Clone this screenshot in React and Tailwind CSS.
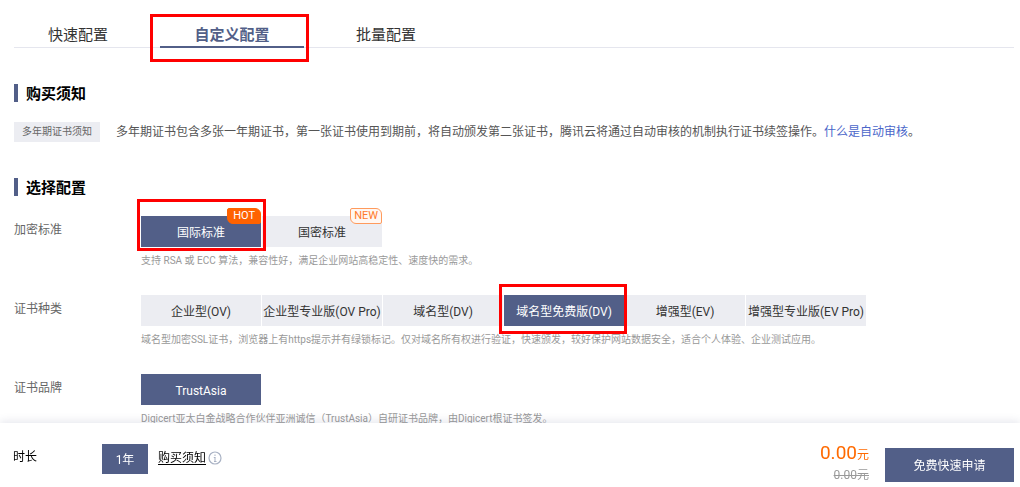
import { useState } from "react"

const TABS = ["快速配置", "自定义配置", "批量配置"]

const STANDARDS = [
  { name: "国际标准", badge: "HOT" },
  { name: "国密标准", badge: "NEW" },
]

const TYPES = [
  { name: "企业型(OV)" },
  { name: "企业型专业版(OV Pro)" },
  { name: "域名型(DV)" },
  { name: "域名型免费版(DV)" },
  { name: "增强型(EV)" },
  { name: "增强型专业版(EV Pro)" },
]

const BRANDS = [{ name: "TrustAsia" }]

// Red frame around a highlighted control
function Mark({ className }) {
  return <span className={`absolute border-3 border-[#ff0000] pointer-events-none z-10 ${className}`} />
}

function Title({ children }) {
  return (
    <h2 className="flex items-center gap-2 h-[18px] text-[15px] font-bold text-black">
      <span className="w-1 h-[18px] bg-[#525f88]" />
      <span className="pt-0.5">{children}</span>
    </h2>
  )
}

function Badge({ type }) {
  return (
    <span
      className={`absolute right-0 -top-2 h-4 border rounded-tl-xs rounded-tr-md rounded-bl-md rounded-br-xs text-[11px] leading-[14px] ${
        type === "HOT"
          ? "bg-[#ff6200] border-[#ff6200] text-white px-[5px]"
          : "bg-[#fff7f2] border-[#ff9a5c] text-[#ff7a2b] px-[3px]"
      }`}
    >
      {type}
    </span>
  )
}

function OptionRow({ label, options, value, onChange, desc, markClass }) {
  return (
    <div className="flex">
      <div className="w-[127px] shrink-0 text-xs leading-7 text-[#666]">{label}</div>
      <div className="flex-1">
        <div role="group" aria-label={label} className="flex gap-px">
          {options.map((o) => (
            <div key={o.name} className="relative w-[120px]">
              <button
                type="button"
                aria-pressed={value === o.name}
                onClick={() => onChange(o.name)}
                className={`w-full h-[31px] pt-[3px] text-xs whitespace-nowrap ${
                  value === o.name ? "bg-[#525f88] text-white" : "bg-[#ecedf2] text-[#333]"
                }`}
              >
                {o.name}
              </button>
              {o.badge && <Badge type={o.badge} />}
              {markClass && value === o.name && <Mark className={markClass} />}
            </div>
          ))}
        </div>
        <p className="mt-1 text-[10px] leading-5 text-[#999]">{desc}</p>
      </div>
    </div>
  )
}

function App() {
  const [tab, setTab] = useState("自定义配置")
  const [standard, setStandard] = useState("国际标准")
  const [type, setType] = useState("域名型免费版(DV)")
  const [brand, setBrand] = useState("TrustAsia")

  return (
    <div className="bg-white font-['Roboto','Noto_Sans_CJK_SC',sans-serif]">
      <main className="pl-3.5 pr-1.5 pt-[23px]">
        {/* Tabs */}
        <nav className="border-b border-[#e5e6ee]">
          <div className="flex gap-2.5 -ml-2">
            {TABS.map((t) => (
              <div key={t} className="relative w-36">
                <button
                  type="button"
                  onClick={() => setTab(t)}
                  className={`w-full h-6 -mb-px text-[15px] leading-[22px] border-b-2 ${
                    tab === t ? "border-[#525f88] text-[#525f88] font-bold" : "border-transparent text-[#333]"
                  }`}
                >
                  {t}
                </button>
                {tab === t && <Mark className="-left-2.5 -right-[5px] -top-[9px] -bottom-[15px]" />}
              </div>
            ))}
          </div>
        </nav>

        {/* Notice */}
        <section className="mt-9">
          <Title>购买须知</Title>
          <div className="flex items-center gap-4 mt-5">
            <span className="h-5 px-2 bg-[#ecedf2] text-[10px] leading-5 text-[#666] whitespace-nowrap">
              多年期证书须知
            </span>
            <p className="text-xs leading-5 text-[#555]">
              多年期证书包含多张一年期证书，第一张证书使用到期前，将自动颁发第二张证书，腾讯云将通过自动审核的机制执行证书续签操作。
              <a href="#auto-review" className="text-[#4a66c9]">什么是自动审核</a>。
            </p>
          </div>
        </section>

        {/* Configuration */}
        <section className="mt-9">
          <Title>选择配置</Title>
          <div className="flex flex-col gap-6 mt-5">
            <OptionRow
              label="加密标准"
              options={STANDARDS}
              value={standard}
              onChange={setStandard}
              desc="支持 RSA 或 ECC 算法，兼容性好，满足企业网站高稳定性、速度快的需求。"
              markClass="-left-1 -right-[5px] -top-[17px] -bottom-1"
            />
            <OptionRow
              label="证书种类"
              options={TYPES}
              value={type}
              onChange={setType}
              desc="域名型加密SSL证书，浏览器上有https提示并有绿锁标记。仅对域名所有权进行验证，快速颁发，较好保护网站数据安全，适合个人体验、企业测试应用。"
              markClass="-left-[5px] -right-[3px] -top-[11px] -bottom-2"
            />
            <OptionRow
              label="证书品牌"
              options={BRANDS}
              value={brand}
              onChange={setBrand}
              desc="Digicert亚太白金战略合作伙伴亚洲诚信（TrustAsia）自研证书品牌，由Digicert根证书签发。"
            />
          </div>
        </section>
      </main>

      {/* Order bar */}
      <footer className="fixed bottom-0 inset-x-0 z-20 flex items-center justify-between h-16 pl-[13px] pr-1.5 bg-white shadow-[0_-2px_8px_rgba(82,95,136,0.14)]">
        <div className="flex items-center pt-1 text-xs text-black">
          <span className="w-[89px]">时长</span>
          <button type="button" className="w-[46px] h-[30px] mt-1 pt-0.5 bg-[#525f88] text-white">1年</button>
          <a href="#notice" className="ml-2.5 pt-0.5 underline underline-offset-2">购买须知</a>
          <svg className="ml-0.5 mt-0.5 size-3.5" viewBox="0 0 14 14" fill="none" stroke="#a9b2c4">
            <circle cx="7" cy="7" r="6" strokeWidth="1.2" />
            <path d="M5.8 6.5H7.5M7 6.5V10M6 10.5H8.5" />
            <path d="M6.5 4.2H7.5" strokeWidth="1.4" />
          </svg>
        </div>
        <div className="flex items-center gap-4">
          <div className="pt-4 text-right">
            <p className="text-[19px] leading-6 text-[#ff6a00]">
              0.00<span className="text-xs">元</span>
            </p>
            <p className="text-xs leading-5 text-[#999] line-through">0.00元</p>
          </div>
          <button type="button" className="w-[129px] h-[34px] mt-6 pt-0.5 mb-1 bg-[#525f88] text-xs text-white">
            免费快速申请
          </button>
        </div>
      </footer>
    </div>
  )
}

export default App
